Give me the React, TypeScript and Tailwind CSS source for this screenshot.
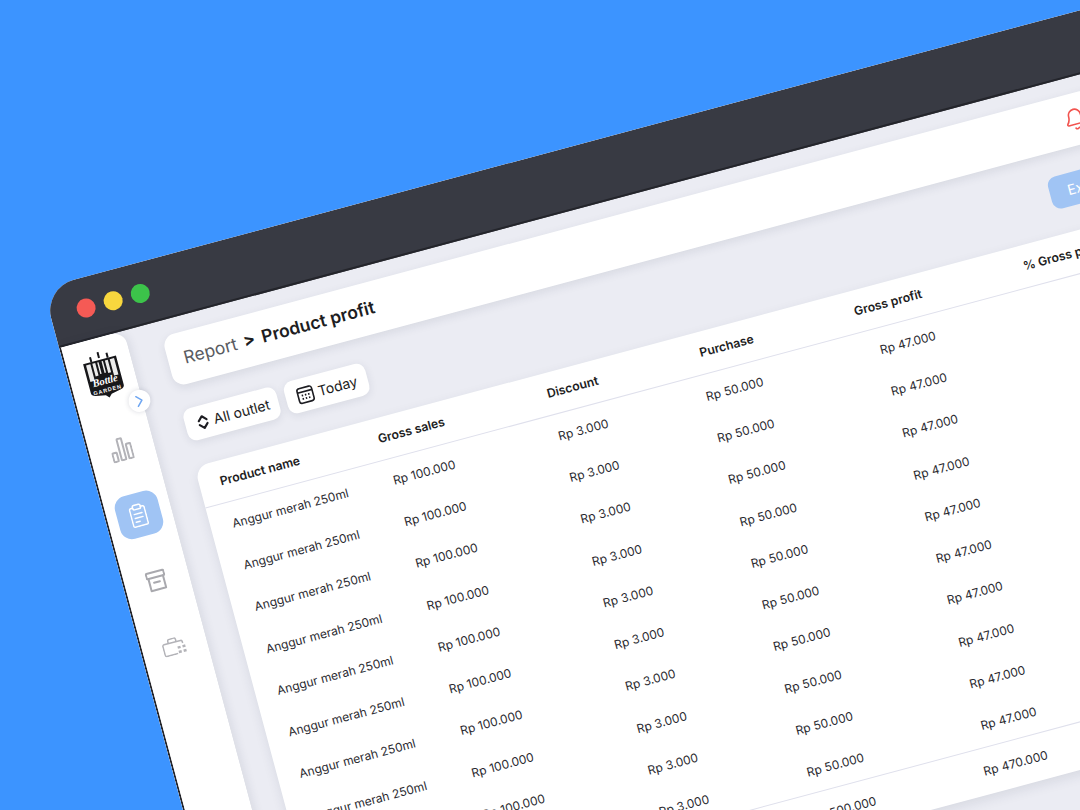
import { Bell } from "lucide-react";

const rows = Array.from({ length: 10 });

function Logo() {
  return (
    <svg width="38" height="48" viewBox="0 0 38 48" className="block">
      <path d="M2 8h34v30c0 2-1 3-4 4l-10 2-3 3-3-3-10-2c-3-1-4-2-4-4z" fill="#17171a" />
      <path d="M4.500 10h4.500v17H4.500zM11 10h3v13h-3zM16 10h1.500v12H16zM20.500 10H22v12h-1.500zM24 10h3v13h-3zM29 10h4.500v17H29z" fill="#ececec" />
      <path d="M18 0h2v6h-2zM9.500 3h2v5h-2zM26.500 3h2v5h-2z" fill="#17171a" />
      <text x="19" y="33" textAnchor="middle" fontSize="10.500" fontStyle="italic" fontWeight="700" fill="#fff" fontFamily="Liberation Serif, serif">Bottle</text>
      <text x="19" y="41" textAnchor="middle" fontSize="5.500" fontWeight="700" letterSpacing="0.900" fill="#fff" fontFamily="Liberation Sans, sans-serif">GARDEN</text>
    </svg>
  );
}

function BarsIcon() {
  return (
    <svg width="22" height="24" viewBox="0 0 22 24" fill="none" stroke="#b3b3b8" strokeWidth="2">
      <rect x="1" y="14" width="4.500" height="9" rx="0.800" />
      <rect x="8.750" y="1" width="4.500" height="22" rx="0.800" />
      <rect x="16.500" y="8" width="4.500" height="15" rx="0.800" />
    </svg>
  );
}

function ClipboardIcon() {
  return (
    <svg width="17" height="24" viewBox="0 0 17 24" fill="none" stroke="#fff" strokeWidth="1.500" strokeLinejoin="round" strokeLinecap="round">
      <path d="M4.500 4H2.500A1.500 1.500 0 0 0 1 5.500v16A1.500 1.500 0 0 0 2.500 23h12a1.500 1.500 0 0 0 1.500-1.500v-16A1.500 1.500 0 0 0 14.500 4h-2" />
      <rect x="4.500" y="1.500" width="8" height="4.500" rx="1.500" />
      <path d="M4.500 10.500h8M4.500 14.500h8M4.500 18.500h4" />
    </svg>
  );
}

function ArchiveIcon() {
  return (
    <svg width="20" height="22" viewBox="0 0 20 22" fill="none" stroke="#a9a9ae" strokeWidth="2" strokeLinejoin="round" strokeLinecap="round">
      <rect x="1" y="2" width="18" height="5.500" rx="0.800" />
      <path d="M2.500 7.500V20h15V7.500" />
      <path d="M7 12.500h6" />
    </svg>
  );
}

function CaseIcon() {
  return (
    <svg width="24" height="18" viewBox="0 0 24 18" fill="none" stroke="#b3b3b8" strokeWidth="1.500" strokeLinejoin="round">
      <path d="M14 17H2.500A1.500 1.500 0 0 1 1 15.500v-9A1.500 1.500 0 0 1 2.500 5h17A1.500 1.500 0 0 1 21 6.500V8" />
      <path d="M7 5V2.500A1.500 1.500 0 0 1 8.500 1h5A1.500 1.500 0 0 1 15 2.500V5" />
      <path d="M15 10h3v2.500h-3zM20 10h3v2.500h-3zM15 14.500h3V17h-3zM20 14.500h3V17h-3z" fill="#b3b3b8" stroke="none" />
    </svg>
  );
}

function UpDownIcon() {
  return (
    <svg width="12" height="16" viewBox="0 0 12 16" fill="none" stroke="#1d1d22" strokeWidth="2.200" strokeLinejoin="round" strokeLinecap="round">
      <path d="M2 6l4-4 4 4M2 10l4 4 4-4" />
    </svg>
  );
}

function CalendarIcon() {
  return (
    <svg width="18" height="18" viewBox="0 0 18 18" fill="none" stroke="#1d1d22" strokeWidth="1.600">
      <rect x="1.500" y="1.500" width="15" height="15" rx="2.500" />
      <path d="M1.500 5.500h15" />
      <path d="M5 9h1.500M8.300 9h1.500M11.600 9h1.500M5 12.500h1.500M8.300 12.500h1.500M11.600 12.500h1.500" strokeWidth="1.800" />
    </svg>
  );
}

export default function App() {
  return (
    <div className="relative h-[810px] w-[1080px] overflow-hidden bg-[#3c94ff] font-['Inter',sans-serif]">
      <div className="absolute left-[43px] top-[288px] flex h-[1000px] w-[1400px] origin-top-left rotate-[-15deg] flex-col overflow-hidden rounded-t-[32px] bg-[#ebecf3]">
        <div className="flex h-[62px] shrink-0 items-center gap-[9px] border-b-2 border-[#24252b] bg-[#383a43] pl-[27px]">
          <span className="h-[19px] w-[19px] rounded-full bg-[#f55a55]" />
          <span className="h-[19px] w-[19px] rounded-full bg-[#f8d73e]" />
          <span className="h-[19px] w-[19px] rounded-full bg-[#3cc34a]" />
        </div>
        <div className="flex min-h-0 flex-1">
          <aside className="relative flex w-[67px] shrink-0 flex-col items-center rounded-tr-[14px] border-l-2 border-[#24252b] bg-white bg-[radial-gradient(#eceef2_0.6px,transparent_0.7px)] bg-[size:4px_4px] pr-[2px] pt-[14px] shadow-[2px_0_10px_rgba(40,45,80,0.1)]">
            <div className="ml-[4px]"><Logo /></div>
            <button className="absolute right-[-8px] top-[61px] flex h-[22px] w-[22px] items-center justify-center rounded-full bg-white shadow-[0_0_5px_rgba(40,45,80,0.18)]">
              <svg width="8" height="12" viewBox="0 0 8 12" fill="none" stroke="#6ea6f2" strokeWidth="1.500" strokeLinecap="round" strokeLinejoin="round">
                <path d="M1.500 1l5 5-5 5" />
              </svg>
            </button>
            <div className="mt-[40px] flex h-[24px] items-center justify-center"><BarsIcon /></div>
            <div className="mt-[34px] flex h-[44px] w-[44px] items-center justify-center rounded-[12px] bg-[#a0c4f4]"><ClipboardIcon /></div>
            <div className="mt-[35px] flex h-[22px] items-center justify-center"><ArchiveIcon /></div>
            <div className="mt-[48px] flex h-[18px] items-center justify-center"><CaseIcon /></div>
          </aside>
          <main className="flex min-w-0 flex-1 flex-col pl-[35px] pr-[39px] pt-[16px]">
            <div className="flex h-[52px] shrink-0 items-center justify-between rounded-[12px] bg-white pl-[16px] pr-[308px] shadow-[0_3px_10px_rgba(40,45,80,0.1)]">
              <div className="flex items-center gap-[7px]">
                <span className="text-[17.500px] text-[#5a5b61]">Report</span>
                <span className="text-[17px] font-bold text-[#1d1d22]">&gt;</span>
                <span className="text-[17.500px] font-semibold text-[#1d1d22]">Product profit</span>
              </div>
              <Bell size={24} color="#f2544f" strokeWidth={1.600} />
            </div>
            <div className="mt-[24px] flex h-[33px] shrink-0 gap-[8px] pr-[244px]">
              <div className="flex h-full w-[96px] items-center gap-[5px] rounded-[9px] bg-white pl-[12px] text-[14px] text-[#1d1d22] shadow-[0_2px_8px_rgba(40,45,80,0.1)]">
                <UpDownIcon /> All outlet
              </div>
              <div className="flex h-full w-[84px] items-center gap-[4px] rounded-[9px] bg-white pl-[11px] text-[14px] text-[#1d1d22] shadow-[0_2px_8px_rgba(40,45,80,0.1)]">
                <CalendarIcon /> Today
              </div>
              <div className="ml-auto flex h-full w-[120px] items-center rounded-[9px] bg-[#a0c4f4] pl-[18px] text-[14px] text-white">Export</div>
            </div>
            <div className="-ml-[2px] mt-[25px] h-[522px] w-[1160px] shrink-0 rounded-[14px] bg-white shadow-[0_4px_12px_rgba(40,45,80,0.1)]">
              <div className="grid h-[43px] grid-cols-[163.500px_175px_158px_160px_175px_1fr] items-center border-b border-[#dfe0ec] pl-[21px] text-[12.250px] font-semibold text-[#1d1d22]">
                <span>Product name</span>
                <span>Gross sales</span>
                <span>Discount</span>
                <span>Purchase</span>
                <span>Gross profit</span>
                <span>% Gross profit</span>
              </div>
              <div className="h-[433px] border-b border-[#dfe0ec]">
                {rows.map((_, i) => (
                  <div key={i} className="grid h-[43.300px] grid-cols-[166.500px_171px_153px_180px_229px_1fr] items-center pl-[22px] text-[12px] text-[#2a2a30]">
                    <span>Anggur merah 250ml</span>
                    <span>Rp 100.000</span>
                    <span>Rp 3.000</span>
                    <span>Rp 50.000</span>
                    <span>Rp 47.000</span>
                    <span className="pl-[10px]">47%</span>
                  </div>
                ))}
              </div>
              <div className="grid h-[46px] grid-cols-[166.500px_163px_154px_178px_229px_1fr] items-center pl-[22px] text-[12px] text-[#2a2a30]">
                <span>Total</span>
                <span>Rp 1.000.000</span>
                <span>Rp 30.000</span>
                <span>Rp 500.000</span>
                <span>Rp 470.000</span>
                <span className="pl-[10px]">47%</span>
              </div>
            </div>
          </main>
        </div>
      </div>
    </div>
  );
}
